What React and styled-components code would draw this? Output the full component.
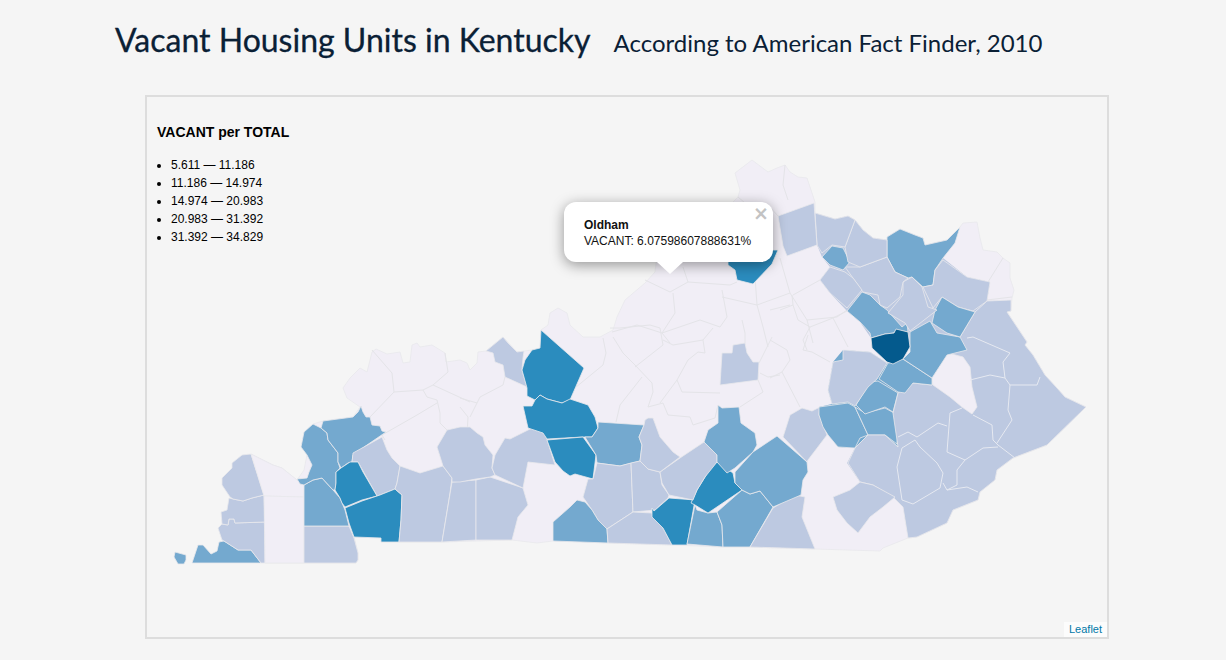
import React from 'react';
import styled, { createGlobalStyle } from 'styled-components';

const GlobalStyle = createGlobalStyle`
   html, body {
      margin: 0;
      padding: 0;
      background: #f5f5f5;
   }
`;

const Page = styled.div`
   width: 1226px;
   height: 660px;
   overflow: hidden;
   background: #f5f5f5;
`;

const Header = styled.header`
   display: flex;
   align-items: baseline;
   gap: 23px;
   height: 95px;
   box-sizing: border-box;
   padding: 17px 0 0 115px;
   color: #0a2035;
   font-family: Lato, sans-serif;
`;

const Title = styled.h1`
   margin: 0;
   font-size: 32px;
   line-height: 46px;
   font-weight: 400;
   -webkit-text-stroke: 0.3px #0a2035;
`;

const Subtitle = styled.h2`
   margin: 0;
   font-size: 24px;
   line-height: 46px;
   font-weight: 400;
`;

const MapFrame = styled.div`
   position: relative;
   width: 964px;
   height: 544px;
   box-sizing: border-box;
   margin-left: 145px;
   border: 2px solid #dddddd;
   font-family: 'Liberation Sans', Arial, sans-serif;
`;

const MapCanvas = styled.svg`
   display: block;
   width: 960px;
   height: 540px;
`;

const County = styled.polygon`
   fill: ${p => p.$fill};
   stroke: #e8e8ec;
   stroke-width: 0.8;
   stroke-linejoin: round;
`;

const Backing = styled.polygon`
   fill: ${p => p.$fill};
`;

const Border = styled.polyline`
   fill: none;
   stroke: ${p => p.$stroke};
   stroke-width: 1;
   stroke-linejoin: round;
`;

const Legend = styled.div`
   position: absolute;
   left: 10px;
   top: 27px;
   color: #000;
`;

const LegendTitle = styled.div`
   font-size: 14px;
   font-weight: 700;
   line-height: 16px;
   margin-bottom: 16px;
`;

const LegendList = styled.ul`
   margin: 0;
   padding: 0 0 0 14px;
   font-size: 12px;
   line-height: 18px;
`;

const Popup = styled.div`
   position: absolute;
   left: 417px;
   top: 105px;
   width: 209px;
   height: 60px;
   box-sizing: border-box;
   padding: 15px 20px;
   background: #fff;
   border-radius: 12px;
   box-shadow: 0 3px 14px rgba(0, 0, 0, 0.4);
   color: #111;
   font-size: 12px;
   line-height: 16px;
   white-space: nowrap;
`;

const PopupName = styled.div`
   font-weight: 700;
`;

const PopupClose = styled.span`
   position: absolute;
   top: 1px;
   right: 4px;
   color: #c3c3c3;
   font: 700 19px/20px 'DejaVu Sans', sans-serif;
`;

const PopupTip = styled.span`
   position: absolute;
   left: 93px;
   top: 60px;
   width: 0;
   height: 0;
   border-left: 13px solid transparent;
   border-right: 13px solid transparent;
   border-top: 12px solid #fff;
`;

const Attribution = styled.a`
   position: absolute;
   right: 0;
   bottom: 0;
   padding: 0 5px;
   background: rgba(255, 255, 255, 0.7);
   color: #0078a8;
   font-size: 11px;
   line-height: 15px;
   text-decoration: none;
`;

const C1 = '#f1eef6';
const C2 = '#bdc9e1';
const C3 = '#74a9cf';
const C4 = '#2b8cbe';
const C5 = '#045a8d';

const BASE =
   '251,454 273,465 282,468 297,480 304,470 313,424 323,421 353,417 360,407 347,398 343,388 350,378 360,368 367,372 372,352 376,349 387,354 400,352 403,363 410,362 412,345 417,343 420,347 432,345 445,353 446,362 460,360 467,363 470,370 477,363 478,352 486,351 503,337 517,352 532,350 540,348 541,330 548,325 550,313 558,308 567,313 570,325 583,337 600,337 613,330 617,317 625,300 645,283 655,272 660,230 730,205 738,197 740,190 735,173 752,160 768,172 777,168 785,165 790,172 798,177 807,178 815,202 815,213 835,219 848,216 855,220 863,230 873,238 887,240 887,237 900,229 915,235 923,238 925,245 947,240 960,227 963,223 977,222 980,238 983,250 997,252 1003,258 1010,263 1010,278 1014,290 1012,298 1011,311 1007,312 1027,342 1025,345 1033,355 1045,375 1057,388 1065,397 1086,407 1047,445 1013,458 997,470 995,480 980,492 978,500 953,510 947,523 917,537 908,538 883,548 880,551 815,549 750,547 723,547 672,545 608,543 553,541 537,543 512,540 442,542 399,542 381,542 381,538 354,537 358,553 358,560 356,563 265,563 264,496';

const EAST =
   '960,337 975,312 987,301 1011,300 1011,311 1007,312 1027,342 1025,345 1033,355 1045,375 1057,388 1065,397 1086,407 1047,445 1013,458 997,470 995,480 980,492 978,500 953,510 947,523 917,537 908,538 903,507 893,497 873,485 860,482 848,463 855,448 868,435 885,435 898,447 893,413 898,393 913,383 932,385 945,360';

// fills the slivers where two hand traced counties don't quite meet
const BACKINGS = [
   [C2, '815,213 835,219 848,216 855,220 863,230 873,238 887,240 943,258 967,277 990,282 987,301 975,312 960,337 947,340 910,345 871,338 860,322 847,311 830,293 820,280 830,267 822,257 817,245'],
   [C3, '828,390 832,404 819,407 823,427 838,447 855,448 868,435 885,435 898,447 893,413 898,393 913,383 932,385 932,378 903,359 887,363 870,352 843,350 833,362'],
   [C2, '847,463 855,448 868,435 885,435 898,447 903,507 893,497 873,485 860,482'],
];

const COUNTIES = [
   [C3, '175,552 186,555 186,560 184,564 178,564 174,557'],
   [C3, '192,563 198,545 203,545 211,554 217,551 219,542 224,541 238,550 251,550 261,563'],
   [C2, '218,528 222,524 228,525 229,519 234,519 235,523 265,522 265,563 261,563 251,550 238,550 224,541 222,540'],
   [C2, '229,498 233,499 243,501 252,498 264,495 265,522 235,523 234,519 229,519 228,525 222,524 221,512 227,510'],
   [C2, '251,454 242,455 232,463 232,468 222,478 222,485 230,497 233,499 243,501 252,498 264,495'],
   [C1, '251,454 273,465 282,468 297,480 304,485 304,497 264,496'],
   [C1, '264,496 304,497 304,563 265,563'],
   [C2, '304,526 349,526 354,538 358,553 358,560 356,563 304,563'],
   [C3, '304,485 313,480 322,478 333,490 340,498 345,510 349,526 304,526'],
   [C3, '297,479 307,478 309,472 312,465 307,455 301,447 304,432 313,424 321,428 327,433 328,440 338,453 338,462 340,468 336,472 336,483 335,490 333,490 322,478 313,480 304,485 300,484'],
   [C3, '321,428 323,421 353,417 358,412 361,406 363,412 366,417 370,417 372,425 380,426 382,431 386,432 367,445 353,455 352,462 348,463 341,468 338,462 338,453 328,440 327,433'],
   [C2, '353,453 382,437 387,450 392,458 400,466 397,483 395,489 380,495 377,496 358,462 352,462'],
   [C4, '336,472 341,468 350,462 358,462 363,472 377,496 362,500 345,507 342,503 340,498 335,490 336,483'],
   [C4, '345,508 362,501 380,495 395,489 402,495 401,520 399,542 381,542 381,538 354,537 349,523'],
   [C2, '400,466 420,473 443,466 452,478 450,493 442,542 399,542 401,520 402,495 395,489 397,483'],
   [C2, '452,482 476,480 476,540 442,542'],
   [C2, '476,480 490,477 523,488 528,505 518,517 512,540 476,540'],
   [C2, '437,447 447,430 460,427 470,427 477,433 483,437 485,445 493,455 492,468 495,475 490,477 476,479 460,482 452,482 452,478 443,466'],
   [C2, '495,455 505,438 510,439 532,428 545,433 555,465 528,462 523,488 495,475 492,468'],
   [C2, '486,351 503,337 508,343 517,352 524,351 523,358 522,370 527,387 505,377 503,365 495,362 493,353'],
   [C4, '541,330 584,368 570,400 562,403 547,399 540,395 535,400 527,396 527,388 522,370 525,360 532,350 540,348'],
   [C4, '523,406 532,406 535,400 540,395 547,399 562,403 570,399 588,405 595,417 598,428 592,437 583,437 547,439 543,433 528,428'],
   [C4, '547,440 583,437 596,455 593,479 575,474 570,476 563,471 555,462'],
   [C3, '598,422 644,425 639,437 642,445 640,461 620,466 597,463 596,455 585,437 592,437 598,428'],
   [C2, '597,463 620,466 631,463 633,512 607,529 598,520 592,510 583,497 588,479 593,479'],
   [C2, '631,463 640,461 648,469 660,472 662,485 669,495 668,498 655,510 633,512'],
   [C3, '553,522 570,507 577,500 585,502 592,510 598,520 607,529 608,543 553,541'],
   [C2, '607,529 633,512 652,513 655,520 663,528 672,545 608,543'],
   [C4, '652,508 654,511 669,498 695,500 687,545 672,545 663,528 655,520 652,517'],
   [C3, '695,505 697,510 708,513 717,512 722,525 723,547 687,544'],
   [C3, '717,512 742,490 750,494 760,491 773,507 750,547 723,547 722,525'],
   [C2, '773,508 795,495 805,497 802,517 815,549 750,547'],
   [C4, '717,462 733,473 735,483 742,490 708,513 695,505 691,503 697,490 705,477 710,468'],
   [C2, '704,442 717,455 717,462 705,477 697,490 693,500 669,495 662,483 660,472 680,458'],
   [C2, '645,420 648,418 653,418 660,437 673,452 680,457 660,472 648,469 640,461 642,445 639,437 644,425'],
   [C3, '718,405 722,408 739,407 741,423 755,433 757,445 753,452 735,468 727,473 717,462 717,455 704,442 708,430 718,423'],
   [C3, '753,452 777,436 807,462 808,472 803,480 801,495 773,507 760,491 750,494 742,490 735,483 735,472'],
   [C2, '720,385 722,353 732,353 733,345 745,343 747,353 753,362 759,362 758,380'],
   [C2, '783,437 790,415 802,408 812,411 820,407 819,415 827,435 808,460 807,462'],
   [C3, '819,407 848,403 855,407 868,435 860,438 855,448 838,447 828,435 823,427 819,415'],
   [C3, '855,407 865,413 885,408 894,413 898,433 897,444 885,435 868,435'],
   [C3, '856,405 870,382 878,381 898,393 893,412 885,407 865,414'],
   [C2, EAST],
   [C1, '932,378 948,353 963,357 970,367 972,387 977,407 972,414 962,407 950,397 933,385'],
   [C3, '879,379 888,363 903,359 932,378 932,385 913,383 905,393 898,392'],
   [C3, '903,359 910,352 910,332 930,321 937,333 960,337 967,350 947,355 932,378'],
   [C2, '843,350 870,352 887,363 877,379 868,387 855,406 848,402 832,404 828,390 833,362 843,360'],
   [C3, '847,311 862,292 870,295 880,305 887,310 902,327 907,323 908,332 896,330 894,333 885,334 871,338 870,333 860,322'],
   [C5, '871,338 885,334 894,333 896,329 908,332 910,347 903,359 893,364 887,362 872,348'],
   [C3, '887,237 900,229 915,235 923,238 925,245 947,240 960,227 955,243 943,258 935,270 933,285 923,287 912,277 908,278 895,272 887,257'],
   [C2, '943,260 967,277 990,282 987,301 973,311 958,307 942,297 933,308 923,287 933,285 935,270'],
   [C3, '942,297 958,307 975,312 960,337 947,333 932,323 935,310'],
   [C2, '912,277 922,287 928,307 937,310 910,331 905,323 888,313 903,295 903,282'],
   [C2, '845,267 860,267 887,257 895,272 908,278 903,282 900,297 887,308 880,305 878,295 863,292 853,278'],
   [C2, '830,267 845,272 853,278 862,290 847,308 830,293 820,280'],
   [C3, '822,257 832,246 843,248 850,262 843,270 830,265'],
   [C2, '845,247 855,220 863,230 873,238 887,240 887,257 860,267 848,262'],
   [C2, '815,213 835,219 848,216 855,220 845,247 832,245 822,253 817,245'],
   [C2, '778,216 814,203 817,245 787,256 783,246'],
   [C4, '728,250 778,250 772,264 753,284 737,280 735,270 728,265'],
   [C2, '833,497 850,490 860,482 873,485 895,497 883,507 870,517 858,533 847,523 837,510'],
];

// county lines inside the light part of the state
const LIGHT_LINES = [
   '394,392 370,417',
   '372,350 392,373 394,392 423,390 433,385 448,372 445,353',
   '433,385 470,402',
   '423,390 427,397 437,400 440,413 440,423 447,430',
   '437,403 417,415 382,435 385,440',
   '460,398 477,403 480,397 503,385 505,377',
   '460,407 468,417 467,435',
   '470,417 477,403',
   '570,392 603,365 606,353 603,338',
   '613,337 623,353 635,365 652,383 653,392 648,407 663,403 668,415 690,417 693,425 715,418 718,405',
   '642,377 620,405 616,422',
   '635,367 663,345 660,328 650,325 620,328 610,328',
   '663,340 673,345 703,340 713,328',
   '703,340 705,353 698,352 688,360 677,380 660,403',
   '677,380 682,392 720,393',
   '742,320 745,333 745,343',
   '759,363 772,337',
   '760,373 768,377 780,375',
   '758,380 763,392 740,407',
   '645,280 670,292 688,282 683,267',
   '688,282 730,285 737,282',
   '673,293 675,313 662,333 670,343',
   '662,333 700,320 720,327 727,317 722,290',
   '612,332 637,325 662,333',
   '722,297 757,305 790,293 780,258',
   '755,277 757,305 763,327 768,347',
   '790,293 807,320 837,317 847,310',
   '807,320 813,343',
   '793,295 820,280',
   '792,295 793,305 780,310',
   '793,305 798,320 810,327 833,318 847,311',
   '810,327 803,340 807,350',
   '833,318 848,347',
   '770,310 790,305',
   '808,335 803,350 812,352 830,362',
   '770,340 787,350 790,360 782,372 770,378',
   '782,372 800,407',
   '738,197 745,203 770,207 778,216',
   '785,165 783,185 788,200',
   '988,282 1003,258',
   '987,300 1012,297',
];

// county lines inside the blue-grey east
const EAST_LINES = [
   '967,338 973,337 1010,353 1003,362 1005,378 1010,385 1037,385 1040,377',
   '970,380 990,375 1005,378',
   '1010,385 1008,410 1012,420 997,443',
   '973,415 992,425 993,440 998,445 1015,458',
   '950,413 947,452 965,460 983,448 998,447',
   '950,413 962,408',
   '898,437 908,432 917,437 938,423 947,426',
   '902,448 897,467 902,500 913,504 940,488 943,473 937,463 920,447 915,440 902,448',
   '943,483 947,490 957,485 957,470 965,460',
   '947,490 967,487 978,492',
];

const LEGEND = [
   '5.611 — 11.186',
   '11.186 — 14.974',
   '14.974 — 20.983',
   '20.983 — 31.392',
   '31.392 — 34.829',
];

const App = () => (
   <Page>
      <GlobalStyle />
      <Header>
         <Title>Vacant Housing Units in Kentucky</Title>
         <Subtitle>According to American Fact Finder, 2010</Subtitle>
      </Header>
      <MapFrame>
         <MapCanvas viewBox="147 97 960 540">
            <County $fill={C1} points={BASE} />
            {LIGHT_LINES.map((line, index) => (
               <Border $stroke="#e4e4e8" points={line} key={index} />
            ))}
            {BACKINGS.map(([fill, points], index) => (
               <Backing $fill={fill} points={points} key={index} />
            ))}
            {COUNTIES.map(([fill, points], index) => (
               <County $fill={fill} points={points} key={index} />
            ))}
            {EAST_LINES.map((line, index) => (
               <Border $stroke="#e6e9f1" points={line} key={index} />
            ))}
         </MapCanvas>
         <Legend>
            <LegendTitle>VACANT per TOTAL</LegendTitle>
            <LegendList>
               {LEGEND.map(item => (
                  <li key={item}>{item}</li>
               ))}
            </LegendList>
         </Legend>
         <Popup>
            <PopupClose>×</PopupClose>
            <PopupName>Oldham</PopupName>
            VACANT: 6.07598607888631%
            <PopupTip />
         </Popup>
         <Attribution>Leaflet</Attribution>
      </MapFrame>
   </Page>
);

export default App;
